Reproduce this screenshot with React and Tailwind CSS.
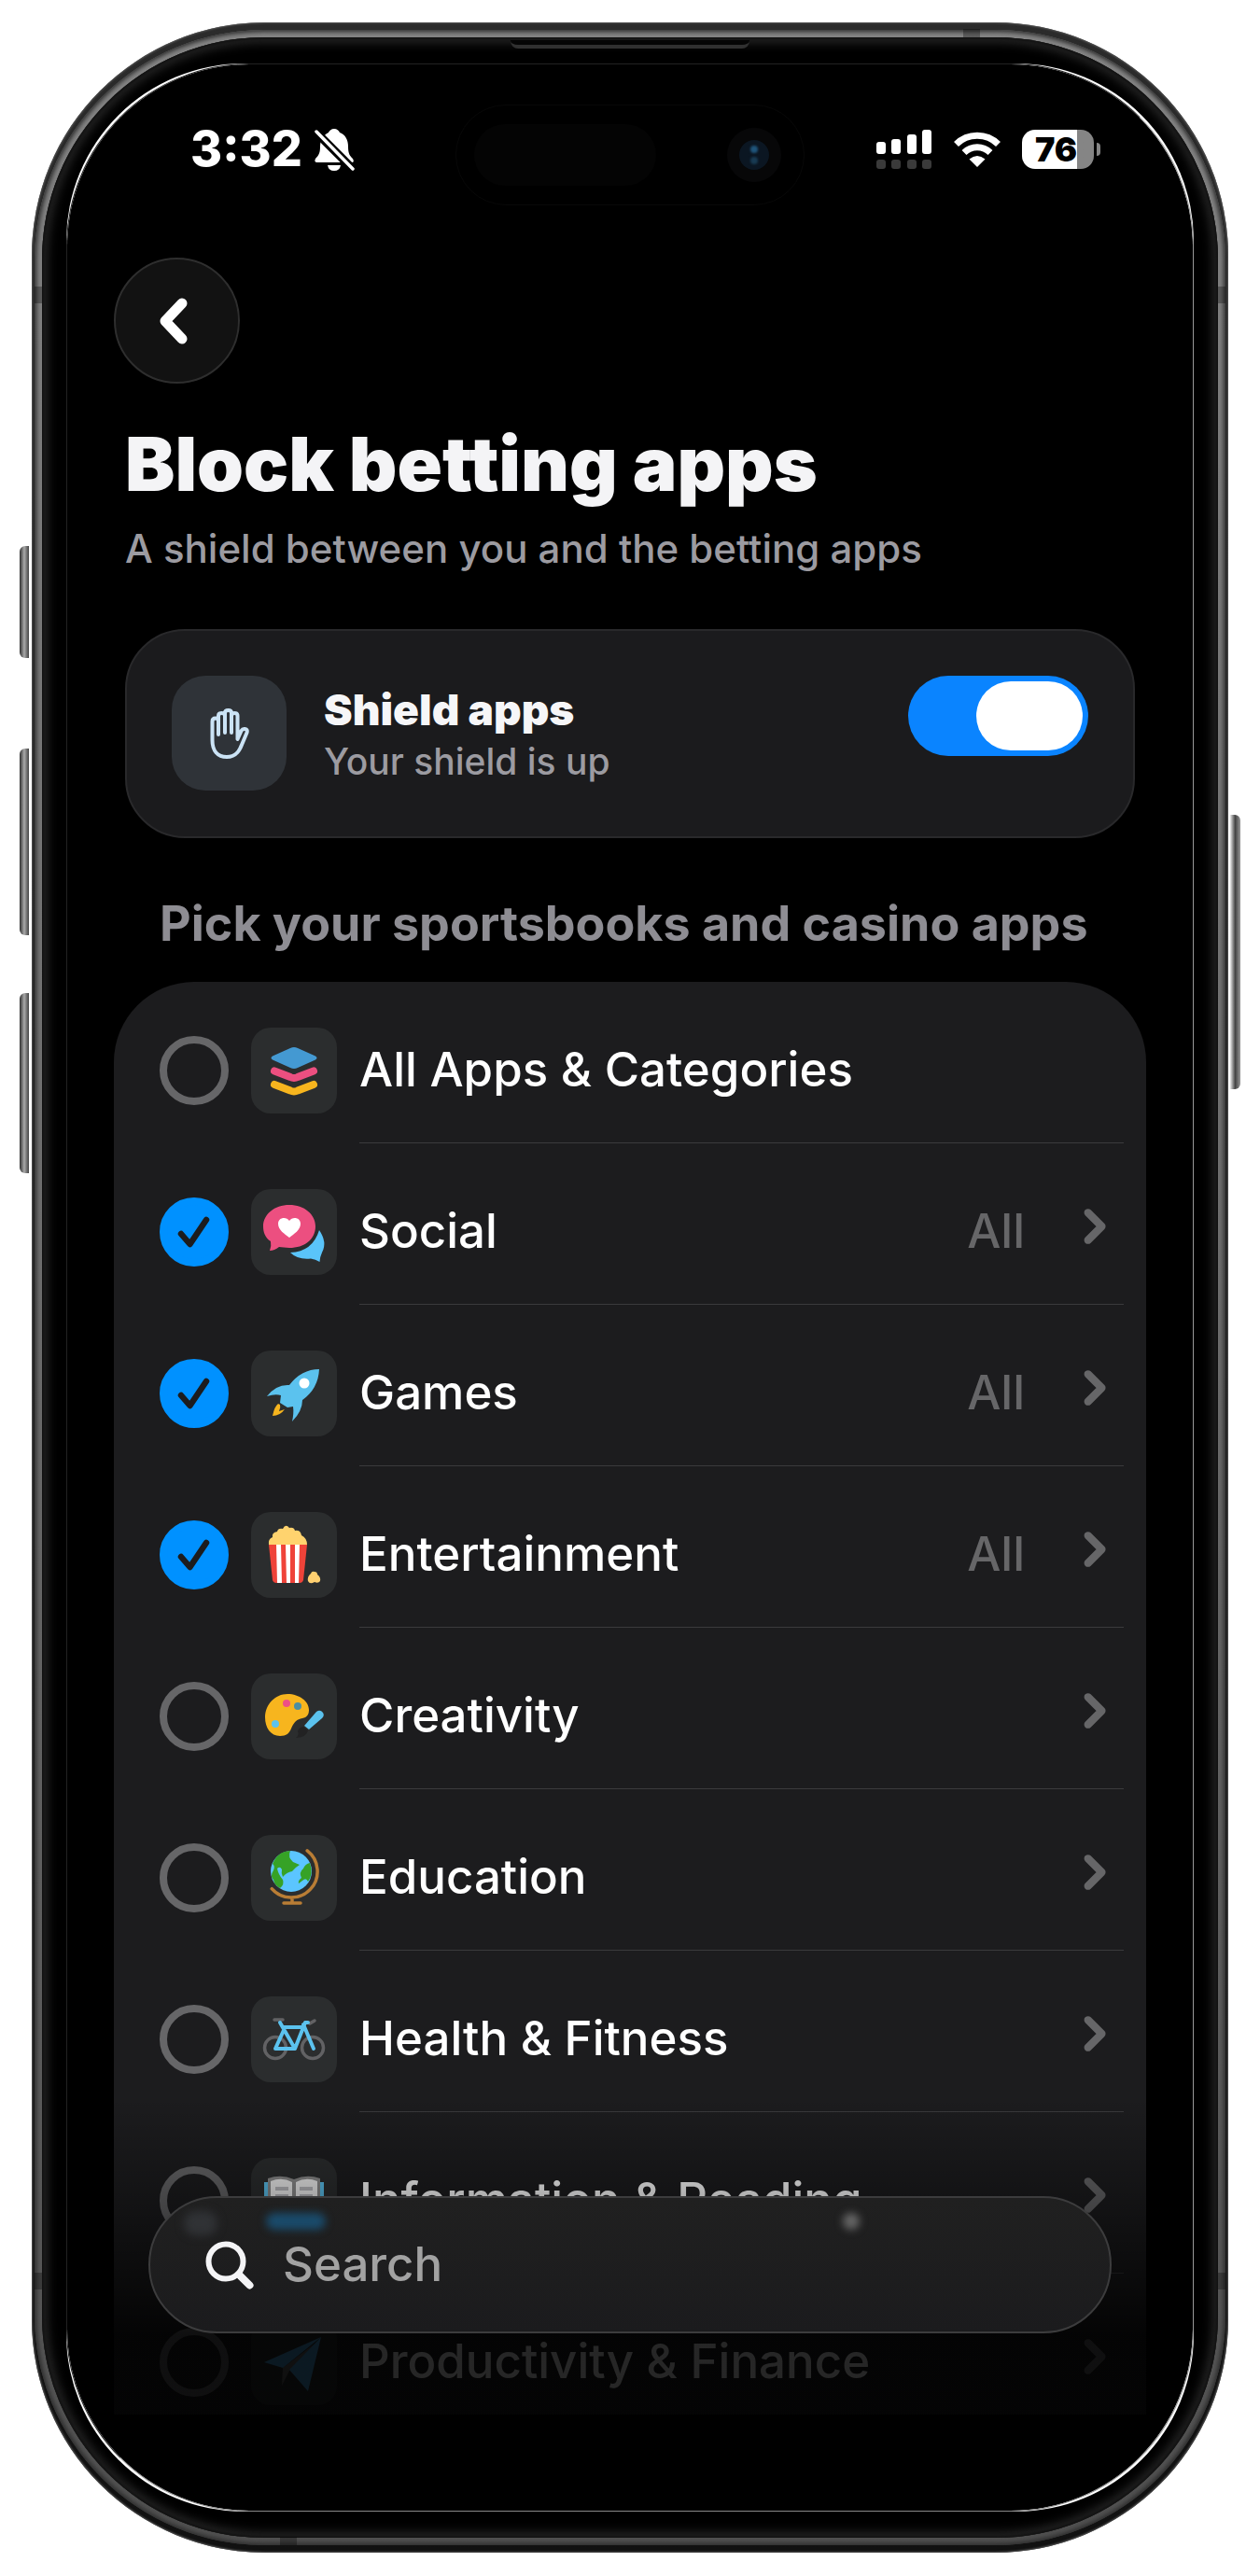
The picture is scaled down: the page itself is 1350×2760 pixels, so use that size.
import React, { useState } from "react";

const LayersIcon = () => (
  <svg viewBox="0 0 92 92" className="size-full" aria-hidden="true">
    <path d="M42 22Q46 20 50 22L69 30.500Q72 32.500 69 34.500L50 43Q46 45 42 43L23 34.500Q20 32.500 23 30.500Z" fill="#4499d2" />
    <path d="M25 46.500L42 53Q46 55 50 53L67 46.500" fill="none" stroke="#ec4f80" strokeWidth="8" strokeLinecap="round" />
    <path d="M25 61L42 67.500Q46 69.500 50 67.500L67 61" fill="none" stroke="#f7b51e" strokeWidth="8" strokeLinecap="round" />
  </svg>
);

const SocialIcon = () => (
  <svg viewBox="0 0 92 92" className="size-full" aria-hidden="true">
    <path d="M73 44Q82 57 76 68Q74 72 73.500 78Q69 75 64 74.500Q50 76 42 68Q66 67 73 44Z" fill="#5ac4fa" />
    <path d="M41 17C57 17 69 27 69 40C69 54 57 63 41 63C37 63 33 62 30 62Q25 66 20 66Q22 61 21 56C15 52 13 46 13 40C13 27 25 17 41 17Z" fill="#ec4f80" />
    <path d="M41 52C36 48 29 44 29 37C29 30 38 29 41 34C44 29 53 30 53 37C53 44 46 48 41 52Z" fill="#fff" />
  </svg>
);

const GamesIcon = () => (
  <svg viewBox="0 0 92 92" className="size-full" aria-hidden="true">
    <path d="M73 20Q54 20 41 37Q27 36 17 49Q26 46 32 48L31 56L39 61L45 60Q46 67 44 76Q55 65 55 53Q72 41 73 20Z" fill="#5bc2ee" />
    <circle cx="57" cy="35" r="5.500" fill="#fff" />
    <path d="M29 57Q25 60 23 70Q31 70 36 63L30 65Q32 61 31 58Z" fill="#f7b51e" />
  </svg>
);

const PopcornIcon = () => (
  <svg viewBox="0 0 92 92" className="size-full" aria-hidden="true">
    <path d="M19 35Q18 29 23 27Q22 22 28 21Q29 17 34 18Q37 12 41 17Q46 16 47 20Q53 19 54 25Q60 28 60 35Z" fill="#ffd36e" />
    <path d="M19 35H60L56 73Q55 76 52 76H27Q24 76 23 73Z" fill="#ef4339" />
    <path d="M27 35H32L33 76H28ZM37 35H42V76H38ZM47 35H52L51 76H47Z" fill="#fff" />
    <path d="M64 66Q65 63 68 64Q71 64 71 67Q75 70 74 74Q72 77 68 75Q63 78 61 74Q60 69 64 66Z" fill="#ffd070" />
  </svg>
);

const PaletteIcon = () => (
  <svg viewBox="0 0 92 92" className="size-full" aria-hidden="true">
    <path d="M39 22C52 22 62 30 62 39C62 44 60 47 55 48C49 49 46 52 43 59C41 64 38 67 31 67C21 67 15 58 15 47C15 33 26 22 39 22Z" fill="#f7b51e" />
    <circle cx="38" cy="32" r="4" fill="#ee4f85" />
    <circle cx="50" cy="35" r="4" fill="#4b8ea3" />
    <circle cx="26" cy="54" r="4" fill="#5bc2ee" />
    <path d="M70 41Q74 38 77 42Q79 45 76 48L62 60L57 56Z" fill="#5bc2ee" />
    <path d="M56 57L61 61Q60 68 48 69Q52 66 50 62Q51 58 56 57Z" fill="#222223" />
  </svg>
);

const GlobeIcon = () => (
  <svg viewBox="0 0 92 92" className="size-full" aria-hidden="true">
    <circle cx="43" cy="39" r="22" fill="#5bc5ff" />
    <path d="M25 27Q31 17 42 17Q39 24 45 29L52 32Q47 35 44 39Q38 40 34 45Q32 41 33 37Q31 33 28 36Q29 42 34 48Q36 53 31 57Q25 54 24 48Q20 44 24 38Q26 33 23 31Z" fill="#36a226" />
    <path d="M63 30Q67 42 61 50Q59 45 55 49L51 52Q50 49 54 46Q51 40 56 36Q58 31 63 30Z" fill="#36a226" />
    <path d="M60.200 16.900A28 28 0 1 1 22.200 57.700M44 67V73M35 73H53" fill="none" stroke="#b97d35" strokeWidth="3.500" strokeLinecap="round" />
  </svg>
);

const BikeIcon = () => (
  <svg viewBox="0 0 92 92" className="size-full" aria-hidden="true" fill="none" strokeLinecap="round" strokeLinejoin="round">
    <g stroke="#626264" strokeWidth="3.500">
      <circle cx="26" cy="55" r="11.500" />
      <circle cx="66" cy="55" r="11.500" />
      <path d="M25 25H34M63 29L68 26" />
    </g>
    <path d="M31 28L47 56M47 56H26L36 34M35 33H57M61 28H58L47 56M56 30L67 56" stroke="#5bc2ee" strokeWidth="4" />
  </svg>
);

const BookIcon = () => (
  <svg viewBox="0 0 92 92" className="size-full" aria-hidden="true">
    <path d="M14 26H78V68H50Q46 72 42 68H14Z" fill="#5bc2ee" />
    <path d="M18 22Q32 17 46 23Q60 17 74 22V64H18Z" fill="#8c8c8c" />
    <path d="M21 25Q33 20 44 26V62H21ZM48 26Q59 20 71 25V62H48Z" fill="#f4f4f4" />
    <path d="M26 33H40M52 33H66M26 41H40M52 41H66" stroke="#bcbcc0" strokeWidth="4" />
  </svg>
);

const PlaneIcon = () => (
  <svg viewBox="0 0 92 92" className="size-full" aria-hidden="true">
    <path d="M34 52L68 26L41 55L33 71Z" fill="#6a6a6a" />
    <path d="M14 46L75 19L34 52ZM75 19L61 77L41 54Z" fill="#4aa5e0" />
  </svg>
);

const HandIcon = () => (
  <svg viewBox="0 0 42 54" className="h-[54px] w-[42px]" fill="none" stroke="#cbe3f5" strokeWidth="4" strokeLinecap="round" strokeLinejoin="round" aria-hidden="true">
    <path d="M9 28V14Q9 10.500 6 10.500Q2.500 10.500 2.500 14V34C2.500 45 8 52 18 52C27 52 31 47 34 39L39.500 26Q40.500 22.500 37.500 22Q35 21.500 33.500 24L29.500 33V8Q29.500 5 26.500 5Q23 5 23 8V26M9 28V8Q9 5 12.500 5Q16 5 16 8V26M16 8V5Q16 2 19.500 2Q23 2 23 5V10" />
  </svg>
);

const BellOffIcon = () => (
  <svg viewBox="0 0 44 46" className="h-[46px] w-[44px]" aria-hidden="true">
    <path d="M22 1C25 1 27 3 28 5C34 7 37 13 37 20C37 28 39 30 42 33Q44 37 41 37H4Q0 37 2 33C6 29 7 26 7 20C7 13 10 8 16 5C17 3 19 1 22 1ZM15 40H29Q28 46 22 46Q16 46 15 40Z" fill="#fff" />
    <path d="M2 4L42 44" stroke="#000" strokeWidth="9" />
    <path d="M3 4L42 44" stroke="#fff" strokeWidth="3.500" strokeLinecap="round" />
  </svg>
);

const StatusIcons = () => (
  <div className="flex items-center gap-[22px]">
    <svg viewBox="0 0 60 42" className="h-[42px] w-[60px]" aria-hidden="true">
      <g fill="#fff">
        <rect x="0" y="13" width="10" height="13" rx="3" />
        <rect x="16" y="10" width="10" height="16" rx="3" />
        <rect x="33" y="5" width="10" height="21" rx="3" />
        <rect x="49" y="0" width="10" height="26" rx="3" />
      </g>
      <g fill="#3a3a3a">
        <rect x="0" y="32" width="10" height="10" rx="3" />
        <rect x="16" y="32" width="10" height="10" rx="3" />
        <rect x="33" y="32" width="10" height="10" rx="3" />
        <rect x="49" y="32" width="10" height="10" rx="3" />
      </g>
    </svg>
    <svg viewBox="0 0 52 40" className="h-[40px] w-[52px]" aria-hidden="true">
      <path d="M3.500 14.500A32 32 0 0 1 48.500 14.500M12 23.500A20 20 0 0 1 40 23.500" fill="none" stroke="#fff" strokeWidth="7" />
      <path d="M26 39L17.500 30.500Q26 23.500 34.500 30.500Z" fill="#fff" />
    </svg>
    <div className="flex items-center gap-[3px]">
      <div className="flex h-[42px] w-[77px] items-center justify-center rounded-[14px] bg-linear-to-r from-white from-76% to-[#858585] to-76% pr-1 text-[36px] font-black text-black">
        76
      </div>
      <span className="h-[14px] w-[4px] rounded-r-full bg-[#858585]" />
    </div>
  </div>
);

const Chevron = ({ className, d, width }) => (
  <svg viewBox="0 0 30 50" className={className} fill="none" stroke="currentColor" strokeWidth={width} strokeLinecap="round" strokeLinejoin="round" aria-hidden="true">
    <path d={d} />
  </svg>
);

const categories = [
  { name: "All Apps & Categories", icon: LayersIcon, single: true },
  { name: "Social", icon: SocialIcon, picked: true },
  { name: "Games", icon: GamesIcon, picked: true },
  { name: "Entertainment", icon: PopcornIcon, picked: true },
  { name: "Creativity", icon: PaletteIcon },
  { name: "Education", icon: GlobeIcon },
  { name: "Health & Fitness", icon: BikeIcon },
  { name: "Information & Reading", icon: BookIcon },
  { name: "Productivity & Finance", icon: PlaneIcon },
];

const CategoryRow = ({ category, checked, onToggle }) => {
  const Icon = category.icon;
  return (
    <li className="flex h-[173px] pl-[49px] pr-6">
      <label className="flex flex-1 items-center pt-4 text-[51px] font-medium text-white">
        <span className="grid shrink-0 place-items-center">
          <input
            type="checkbox"
            checked={checked}
            onChange={onToggle}
            className="col-start-1 row-start-1 size-[74px] appearance-none rounded-full border-8 border-[#666668] checked:border-[#0091ff] checked:bg-[#0091ff]"
          />
          {checked && (
            <svg viewBox="0 0 36 36" className="pointer-events-none col-start-1 row-start-1 size-9" aria-hidden="true">
              <path d="M4 20L13.500 31L31 5" fill="none" stroke="#1c1c1e" strokeWidth="6.500" strokeLinecap="round" strokeLinejoin="round" />
            </svg>
          )}
        </span>
        <span className="ml-6 size-[92px] shrink-0 rounded-[21px] bg-[#2b2d2e]">
          <Icon />
        </span>
        <span className="ml-6 whitespace-nowrap">{category.name}</span>
      </label>
      {!category.single && (
        <button type="button" aria-label={`Open ${category.name}`} className="flex items-center pt-4 pr-4 text-[#666668]">
          {checked && <span className="mr-[62px] text-[51px] font-medium">All</span>}
          <Chevron className="mb-3 h-[46px] w-[28px]" d="M6 9L22 25L6 41" width="9" />
        </button>
      )}
    </li>
  );
};

const App = () => {
  const [shield, setShield] = useState(true);
  const [search, setSearch] = useState("");
  const [picked, setPicked] = useState(categories.filter((c) => c.picked).map((c) => c.name));

  const toggle = (name) => {
    setPicked(picked.includes(name) ? picked.filter((n) => n !== name) : [...picked, name]);
  };

  return (
    <div className="bg-white px-8 pt-6 pb-[23px] font-[Inter,sans-serif]">
      <div className="relative mx-[2px] rounded-[250px] bg-linear-to-b from-[#2b2b2b] to-[#111] px-[3px] py-2 shadow-[inset_0_0_2px_1px_#555]">
        {/* side buttons */}
        <span className="absolute top-[561px] -left-[13px] h-[120px] w-[10px] rounded-l-md bg-linear-to-r from-[#333] via-[#aaa] to-[#444]" />
        <span className="absolute top-[778px] -left-[13px] h-[200px] w-[10px] rounded-l-md bg-linear-to-r from-[#333] via-[#aaa] to-[#444]" />
        <span className="absolute top-[1040px] -left-[13px] h-[193px] w-[10px] rounded-l-md bg-linear-to-r from-[#333] via-[#aaa] to-[#444]" />
        <span className="absolute top-[849px] -right-[13px] h-[294px] w-[11px] rounded-r-md bg-linear-to-r from-[#eee] via-[#444] to-[#999]" />

        <div className="rounded-[246px] bg-linear-to-b from-[#858585] via-[#6e6e6e] to-[#505050] p-2 shadow-[inset_0_0_5px_2px_#2a2a2a]">
          <div className="rounded-[238px] bg-black px-[26px] py-7 shadow-[inset_0_0_3px_2px_#111,inset_0_0_12px_5px_#2c2c2c]">
            <div className="rounded-[190px] bg-white">
              <main className="relative overflow-hidden rounded-[196px] border border-t-[#222] border-r-[#999] border-b-[#888] border-l-[#222] bg-black bg-clip-padding pb-[103px]">
                {/* dynamic island */}
                <div className="absolute inset-x-0 top-[43px] mx-auto flex h-[108px] w-[374px] items-center justify-between rounded-full border border-[#080808] pr-6 pl-[19px]">
                  <span className="h-[66px] w-[195px] rounded-full bg-[#040404]" />
                  <span className="flex size-[58px] items-center justify-center rounded-full bg-[#070708]">
                    <span className="flex size-[32px] flex-col items-center justify-center gap-1 rounded-full bg-[#0b1622]">
                      <span className="size-[8px] rounded-full bg-[#1f547a] blur-[1px]" />
                      <span className="size-[8px] rounded-full bg-[#183a52] blur-[1px]" />
                    </span>
                  </span>
                </div>

                <div className="flex h-[182px] items-center justify-between pr-[99px] pl-[132px] text-white">
                  <div className="flex items-center gap-3 text-[52px] font-extrabold">
                    3:32
                    <BellOffIcon />
                  </div>
                  <StatusIcons />
                </div>

                <div className="px-[62px]">
                  <button type="button" aria-label="Back" className="mt-[25px] -ml-3 flex size-[135px] items-center justify-center rounded-full border-2 border-[#2e2e2e] bg-[#121212] text-white">
                    <Chevron className="mr-2 h-[50px] w-[30px]" d="M24 6L6 25L24 44" width="11" />
                  </button>
                  <h1 className="mt-[38px] text-[80px] leading-[96px] font-black whitespace-nowrap text-[#f4f4f6]">Block betting apps</h1>
                  <p className="mt-[19px] text-[42px] leading-[48px] font-medium text-[#9c9ba1]">A shield between you and the betting apps</p>

                  <section className="mt-[62px] flex h-[224px] items-start rounded-[64px] border-2 border-[#29292b] bg-[#1b1b1d] px-12 pt-12">
                    <span className="flex size-[123px] shrink-0 items-center justify-center rounded-[36px] bg-[#2f3338]">
                      <HandIcon />
                    </span>
                    <label htmlFor="shield" className="ml-[40px] flex flex-1 flex-col gap-1 pt-2">
                      <span className="text-[46px] leading-[56px] font-black text-[#f6f6f8]">Shield apps</span>
                      <span className="text-[39px] leading-[48px] font-medium text-[#9c9ba1]">Your shield is up</span>
                    </label>
                    <input
                      id="shield"
                      type="checkbox"
                      role="switch"
                      checked={shield}
                      onChange={() => setShield(!shield)}
                      className="flex h-[86px] w-[193px] shrink-0 appearance-none items-center rounded-full bg-[#39393d] p-[6px] before:h-[74px] before:w-[114px] before:rounded-full before:bg-white before:content-[''] checked:justify-end checked:bg-[#0a84ff]"
                    />
                  </section>

                  <h2 className="mt-[60px] pl-[37px] text-[52px] leading-[64px] font-bold whitespace-nowrap text-[#8e8d93]">Pick your sportsbooks and casino apps</h2>
                </div>

                <div className="relative mx-[50px] mt-[30px] h-[1535px] overflow-hidden rounded-t-[86px] bg-[#1c1c1e]">
                  <ul>
                    {categories.map((category) => (
                      <React.Fragment key={category.name}>
                        <CategoryRow
                          category={category}
                          checked={picked.includes(category.name)}
                          onToggle={() => toggle(category.name)}
                        />
                        <li aria-hidden="true" className="-mt-px mr-6 ml-[263px] h-px bg-[#3a3a3c]" />
                      </React.Fragment>
                    ))}
                  </ul>
                  {/* fade behind the search bar */}
                  <div className="pointer-events-none absolute inset-x-0 bottom-0 h-[340px] bg-linear-to-b from-transparent via-black/35 via-35% to-black/85 to-75%" />
                </div>

                <label className="absolute inset-x-[87px] bottom-[190px] flex h-[147px] items-center overflow-hidden rounded-full border-2 border-[#3c3c3d] bg-linear-to-b from-[#202020] to-[#1b1b1d] pl-[58px]">
                  <span className="absolute top-[14px] left-[36px] h-[26px] w-[36px] rounded-full bg-[#303235] blur-[5px]" />
                  <span className="absolute top-[16px] left-[124px] h-[18px] w-[64px] rounded-full bg-[#1a4b6b] blur-[4px]" />
                  <span className="absolute top-[16px] left-[742px] size-[18px] rounded-full bg-[#666] blur-[4px]" />
                  <svg viewBox="0 0 54 54" className="relative size-[54px]" fill="none" stroke="#f4f4f6" strokeLinecap="round" aria-hidden="true">
                    <circle cx="23" cy="23" r="18.500" strokeWidth="6" />
                    <path d="M37 37L48.500 48.500" strokeWidth="8" />
                  </svg>
                  <input
                    type="text"
                    aria-label="Search"
                    placeholder="Search"
                    value={search}
                    onChange={(e) => setSearch(e.target.value)}
                    className="relative ml-[30px] flex-1 bg-transparent text-[51px] font-medium text-white outline-none placeholder:text-[#a2a2a2]"
                  />
                </label>
              </main>
            </div>
          </div>
        </div>

        {/* speaker slit and antenna bands */}
        <span className="absolute inset-x-0 top-[19px] mx-auto h-[9px] w-[256px] rounded-b-lg border-b-4 border-[#303030] bg-[#050505]" />
        <span className="absolute top-[7px] right-[266px] h-[9px] w-[18px] bg-black/30" />
        <span className="absolute bottom-[8px] left-[266px] h-[9px] w-[18px] bg-black/30" />
        <span className="absolute top-[283px] left-[3px] h-[18px] w-[8px] bg-black/30" />
        <span className="absolute top-[283px] right-[3px] h-[18px] w-[8px] bg-black/30" />
        <span className="absolute bottom-[282px] left-[3px] h-[18px] w-[8px] bg-black/30" />
        <span className="absolute right-[3px] bottom-[282px] h-[18px] w-[8px] bg-black/30" />
      </div>
    </div>
  );
};

export default App;
